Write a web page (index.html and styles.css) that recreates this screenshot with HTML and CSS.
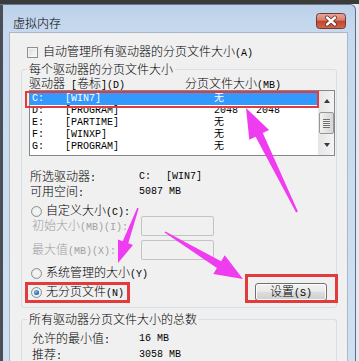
FILE: index.html
```html
<!DOCTYPE html>
<html lang="zh-CN">
<head>
<meta charset="utf-8">
<title>虚拟内存</title>
<link rel="stylesheet" href="styles.css">
</head>
<body>
<div class="win">
  <div class="titlebar">
    <span class="title">虚拟内存</span>
    <span class="close">
      <svg width="30" height="16" viewBox="0 0 30 16">
        <defs>
          <linearGradient id="cg" x1="0" y1="0" x2="0" y2="1">
            <stop offset="0" stop-color="#e9a99c"/>
            <stop offset="0.45" stop-color="#d47f6c"/>
            <stop offset="0.5" stop-color="#c2452d"/>
            <stop offset="1" stop-color="#d0674a"/>
          </linearGradient>
        </defs>
        <rect x="0.5" y="0.5" width="29" height="15" rx="3" fill="url(#cg)" stroke="#6e3a33"/>
        <path d="M11 4.5 L19 11.5 M19 4.5 L11 11.5" stroke="#5a2a22" stroke-width="4" stroke-linecap="round"/>
        <path d="M11 4.5 L19 11.5 M19 4.5 L11 11.5" stroke="#ffffff" stroke-width="2.4" stroke-linecap="round"/>
      </svg>
    </span>
  </div>
  <div class="client">
    <div class="chk-row"><span class="chk"></span><span>自动管理所有驱动器的分页文件大小<span class="a">(A)</span></span></div>

    <fieldset class="grp g1">
      <legend>每个驱动器的分页文件大小</legend>
      <div class="lhead"><span class="c1">驱动器<span class="a"> [</span>卷标<span class="a">](D)</span></span><span>分页文件大小<span class="a">(MB)</span></span></div>
      <div class="listbox">
        <div class="rows">
          <div class="row sel"><span class="d">C:</span><span class="v">[WIN7]</span><span class="s">无</span><span class="s2"></span></div>
          <div class="row"><span class="d">D:</span><span class="v">[PROGRAM]</span><span class="s">2048</span><span class="s2">2048</span></div>
          <div class="row"><span class="d">E:</span><span class="v">[PARTIME]</span><span class="s">无</span><span class="s2"></span></div>
          <div class="row"><span class="d">F:</span><span class="v">[WINXP]</span><span class="s">无</span><span class="s2"></span></div>
          <div class="row"><span class="d">G:</span><span class="v">[PROGRAM]</span><span class="s">无</span><span class="s2"></span></div>
        </div>
        <div class="vscroll">
          <div class="sbtn"><span class="up"></span></div>
          <div class="track"><div class="thumb"><span class="grip"></span></div></div>
          <div class="sbtn"><span class="down"></span></div>
        </div>
      </div>

      <div class="info first"><span class="k">所选驱动器<span class="a">:</span></span><span class="a val">C:</span><span class="a">[WIN7]</span></div>
      <div class="info"><span class="k">可用空间<span class="a">:</span></span><span class="a">5087 MB</span></div>

      <div class="radio-row r1"><span class="radio"></span><span>自定义大小<span class="a">(C):</span></span></div>
      <div class="field-row f1"><span class="flabel">初始大小<span class="a">(MB)(I):</span></span><span class="tbox"></span></div>
      <div class="field-row f2"><span class="flabel">最大值<span class="a">(MB)(X):</span></span><span class="tbox"></span></div>
      <div class="radio-row r2"><span class="radio"></span><span>系统管理的大小<span class="a">(Y)</span></span></div>
      <div class="last-row">
        <div class="radio-row"><span class="radio on"></span><span>无分页文件<span class="a">(N)</span></span></div>
        <button class="btn">设置<span class="a">(S)</span></button>
      </div>
    </fieldset>

    <fieldset class="grp g2">
      <legend>所有驱动器分页文件大小的总数</legend>
      <div class="tot first"><span class="k2">允许的最小值<span class="a">:</span></span><span class="a">16 MB</span></div>
      <div class="tot"><span class="k2">推荐<span class="a">:</span></span><span class="a">3058 MB</span></div>
    </fieldset>
  </div>
</div>

<div class="mark m1"></div>
<div class="mark m2"></div>
<div class="mark m3"></div>

<svg class="arrows" width="359" height="361" viewBox="0 0 359 361">
  <polygon fill="#f03cf0" points="246,108 269.1,130.1 262.8,133.1 297.9,211.6 296.1,212.4 255.6,136.7 249.3,139.7"/>
  <polygon fill="#f03cf0" points="118,263 118,239.6 122.7,241.3 137.3,207.8 138.7,208.2 128.3,243.3 133,245"/>
  <polygon fill="#f03cf0" points="243,279 224.7,255.2 221.1,261.2 165.4,231.4 164.6,232.6 216.9,268 213.3,274"/>
</svg>
</body>
</html>
```

FILE: styles.css
```css
* { box-sizing: border-box; }
html, body { margin: 0; padding: 0; }
body {
  width: 359px;
  height: 361px;
  overflow: hidden;
  position: relative;
  background: linear-gradient(#3b3b3b 0 4px, #e4e9ef 4px);
  font-family: "Noto Sans CJK SC", "Noto Sans", sans-serif;
  font-weight: 300;
  font-size: 12px;
  line-height: 12px;
  color: #000;
}
.a {
  font-family: "Liberation Mono", monospace;
  font-weight: 400;
  font-size: 10px;
}

.win {
  margin: 4px 0 0 0;
  width: 356px;
  height: 357px;
  border-left: 3px solid #4a4f57;
  border-right: 1px solid #5e6d80;
  border-top: 1px solid #6a7889;
  border-top-right-radius: 6px;
  background: linear-gradient(#bcd2ea, #c7d9ee 28px, #cfe0f2);
  padding-left: 6px;
  display: flex;
  flex-direction: column;
}
.titlebar {
  height: 27px;
  display: flex;
  justify-content: space-between;
  align-items: flex-start;
  flex-shrink: 0;
}
.title {
  margin: 12px 0 0 4px;
  font-size: 12px;
}
.close {
  margin: 8px 9px 0 0;
  width: 30px;
  height: 16px;
  display: block;
}
.close svg { display: block; }

.client {
  width: 339px;
  flex: 1;
  background: #f0f0f0;
  border-left: 1px solid #a9b7c7;
  border-top: 1px solid #a9b7c7;
  border-right: 1px solid #a9b7c7;
  display: flex;
  flex-direction: column;
}

.chk-row {
  margin-top: 13px;
  padding-left: 17px;
  height: 12px;
  display: flex;
  align-items: center;
  gap: 5px;
}
.chk {
  width: 11px;
  height: 11px;
  border: 1px solid #8e8f8f;
  background: linear-gradient(135deg, #d9dcdf, #fbfbfb);
  box-shadow: inset 0 0 0 1px #f4f4f4;
}

.grp {
  margin: 0;
  margin-left: 11px;
  width: 316px;
  border: 1px solid #d5dfe5;
  border-radius: 3px;
  padding: 0 1px 6px 7px;
  min-width: 0;
}
.grp legend {
  padding: 0 2px;
  margin-left: -2px;
  line-height: 12px;
  height: 12px;
}
.g1 { margin-top: 5px; }
.g2 { margin-top: 5px; padding-bottom: 10px; }

.lhead {
  margin-top: 3px;
  height: 12px;
  display: flex;
  align-items: center;
}
.c1 { width: 156px; }

.listbox {
  width: 306px;
  height: 66px;
  border: 1px solid #828790;
  background: #fff;
  display: flex;
}
.rows {
  flex: 1;
  padding: 2px 0;
}
.row {
  height: 12px;
  display: flex;
  align-items: center;
  padding-left: 2px;
  font-family: "Liberation Mono", "Noto Sans CJK SC", monospace;
  font-weight: 400;
  font-size: 10px;
}
.row.sel { background: #3399ff; color: #fff; }
.d { width: 33px; }
.v { width: 149px; }
.s { width: 42px; }
.row .s:not(:empty) { }
.vscroll {
  width: 16px;
  display: flex;
  flex-direction: column;
  background: linear-gradient(90deg, #e6e6e6, #f4f4f4);
  border-left: 1px solid #e6e6e6;
}
.sbtn {
  height: 20px;
  display: flex;
  align-items: center;
  justify-content: center;
}
.up, .down {
  width: 0; height: 0;
  border-left: 3.5px solid transparent;
  border-right: 3.5px solid transparent;
}
.up { border-bottom: 4px solid #3a3a3a; }
.down { border-top: 4px solid #3a3a3a; }
.track { flex: 1; padding: 1px 0; display: flex; }
.thumb {
  flex: 1;
  border: 1px solid #979797;
  border-radius: 2px;
  background: linear-gradient(90deg, #f2f2f2, #e2e2e2 50%, #d6d6d6);
  display: flex;
  align-items: center;
  justify-content: center;
}
.grip {
  width: 7px;
  height: 9px;
  background: repeating-linear-gradient(#6f6f6f 0 1px, #eeeeee 1px 2px);
}

.info {
  margin-top: 3px;
  height: 12px;
  padding-left: 1px;
  display: flex;
  align-items: center;
}
.info.first { margin-top: 15px; }
.k { width: 109px; }
.val { width: 27px; }

.radio-row {
  height: 12px;
  padding-left: 2px;
  display: flex;
  align-items: center;
  gap: 4px;
}
.r1 { margin-top: 7px; }
.r2 { margin-top: 7px; }
.radio {
  width: 11px;
  height: 11px;
  border-radius: 50%;
  border: 1px solid #8e8f8f;
  background: radial-gradient(circle at 50% 50%, #f4f4f4 0 40%, #d8dade 100%);
  display: flex;
  align-items: center;
  justify-content: center;
}
.radio.on::after {
  content: "";
  width: 5px;
  height: 5px;
  border-radius: 50%;
  background: radial-gradient(circle at 40% 35%, #7fc2f0, #1b5fa6 70%, #123f75);
}

.field-row {
  height: 20px;
  padding-left: 3px;
  display: flex;
  align-items: center;
  color: #a0a0a0;
}
.f1 { margin-top: -1px; }
.f2 { margin-top: 4px; }
.flabel { width: 109px; }
.tbox {
  width: 73px;
  height: 20px;
  border: 1px solid #c3c3c3;
  border-radius: 2px;
  background: #f0f0f0;
}

.last-row {
  margin-top: 4px;
  height: 18px;
  display: flex;
  justify-content: space-between;
  align-items: center;
}
.btn {
  margin: 0 8px 0 0;
  width: 72px;
  height: 18px;
  padding: 0;
  border: 1px solid #707070;
  border-radius: 3px;
  background: linear-gradient(#f2f2f2, #ebebeb 45%, #dddddd 50%, #cfcfcf);
  font-family: "Noto Sans CJK SC", sans-serif;
  font-weight: 300;
  font-size: 12px;
  line-height: 12px;
  color: #000;
  box-shadow: inset 0 0 0 1px #fcfcfc;
}

.tot {
  margin-top: 4px;
  height: 12px;
  padding-left: 3px;
  display: flex;
  align-items: center;
}
.tot.first { margin-top: 8px; }
.k2 { width: 107px; }

.mark {
  position: absolute;
  border: 3px solid #e23b3b;
}
.m1 { left: 25px; top: 91px; width: 294px; height: 17px; border-width: 2px; }
.m2 { left: 25px; top: 282px; width: 105px; height: 21px; }
.m3 { left: 245px; top: 274px; width: 93px; height: 29px; }

.arrows {
  position: absolute;
  left: 0;
  top: 0;
  pointer-events: none;
}
```
